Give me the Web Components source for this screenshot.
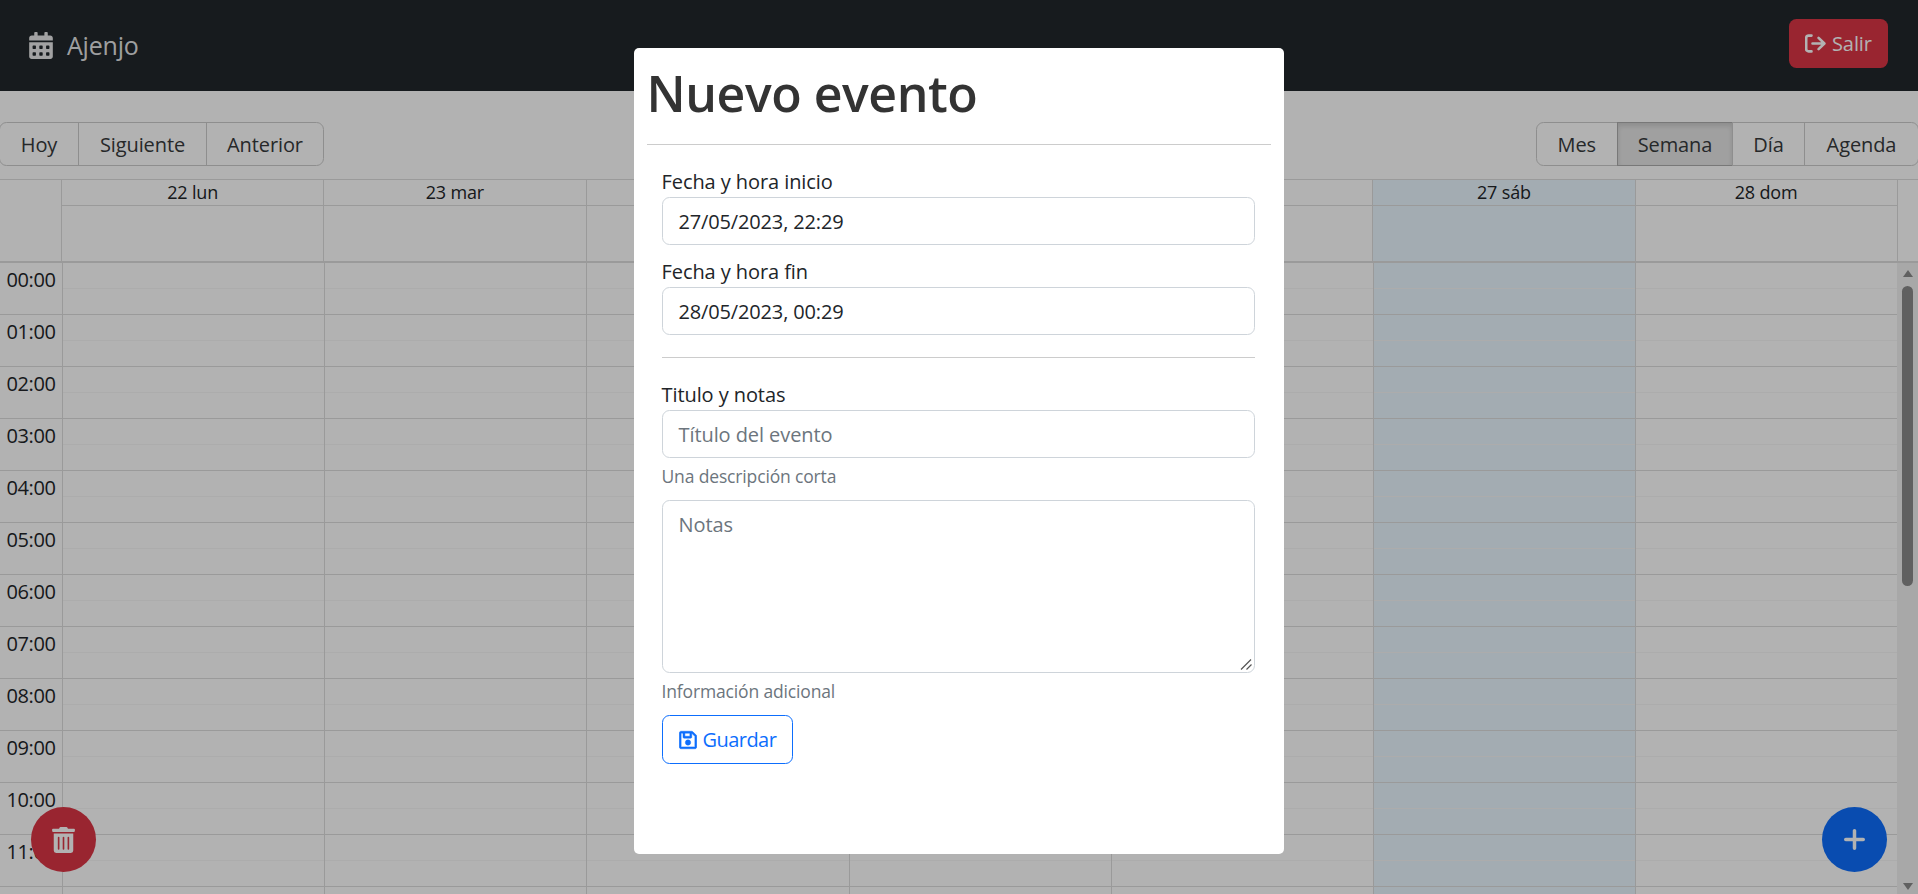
<!DOCTYPE html>
<html lang="es">
<head>
<meta charset="utf-8">
<title>Ajenjo</title>
<style>
html,body{margin:0;padding:0;height:894px;overflow:hidden;background:#fff;}
body{font-family:"Open Sans","Noto Sans",sans-serif;font-size:20px;line-height:1.5;color:#212529;}
</style>
</head>
<body>
<calendar-page></calendar-page>
<script>
const ICONS={
cal:['0 0 448 512','M0 464c0 26.5 21.5 48 48 48h352c26.5 0 48-21.5 48-48V192H0v272zm320-196c0-6.6 5.4-12 12-12h40c6.6 0 12 5.4 12 12v40c0 6.6-5.4 12-12 12h-40c-6.6 0-12-5.4-12-12v-40zm0 128c0-6.6 5.4-12 12-12h40c6.6 0 12 5.4 12 12v40c0 6.6-5.4 12-12 12h-40c-6.6 0-12-5.4-12-12v-40zM192 268c0-6.6 5.4-12 12-12h40c6.6 0 12 5.4 12 12v40c0 6.6-5.4 12-12 12h-40c-6.6 0-12-5.4-12-12v-40zm0 128c0-6.6 5.4-12 12-12h40c6.6 0 12 5.4 12 12v40c0 6.6-5.4 12-12 12h-40c-6.6 0-12-5.4-12-12v-40zM64 268c0-6.6 5.4-12 12-12h40c6.6 0 12 5.4 12 12v40c0 6.6-5.4 12-12 12H76c-6.6 0-12-5.4-12-12v-40zm0 128c0-6.6 5.4-12 12-12h40c6.6 0 12 5.4 12 12v40c0 6.6-5.4 12-12 12H76c-6.6 0-12-5.4-12-12v-40zM400 64h-48V16c0-8.8-7.2-16-16-16h-32c-8.8 0-16 7.2-16 16v48H160V16c0-8.8-7.2-16-16-16h-32c-8.8 0-16 7.2-16 16v48H48C21.5 64 0 85.5 0 112v48h448v-48c0-26.5-21.5-48-48-48z'],
trash:['0 0 448 512','M32 464a48 48 0 0 0 48 48h288a48 48 0 0 0 48-48V128H32zm272-256a16 16 0 0 1 32 0v224a16 16 0 0 1-32 0zm-96 0a16 16 0 0 1 32 0v224a16 16 0 0 1-32 0zm-96 0a16 16 0 0 1 32 0v224a16 16 0 0 1-32 0zM432 32H312l-9.4-18.7A24 24 0 0 0 281.1 0H166.8a23.72 23.72 0 0 0-21.4 13.3L136 32H16A16 16 0 0 0 0 48v32a16 16 0 0 0 16 16h416a16 16 0 0 0 16-16V48a16 16 0 0 0-16-16z'],
save:['0 0 448 512','M433.941 129.941l-83.882-83.882A48 48 0 0 0 316.118 32H48C21.49 32 0 53.49 0 80v352c0 26.51 21.49 48 48 48h352c26.51 0 48-21.49 48-48V163.882a48 48 0 0 0-14.059-33.941zM272 80v80H144V80h128zm122 352H54a6 6 0 0 1-6-6V86a6 6 0 0 1 6-6h42v104c0 13.255 10.745 24 24 24h176c13.255 0 24-10.745 24-24V83.882l78.243 78.243a6 6 0 0 1 1.757 4.243V426a6 6 0 0 1-6 6zM224 252a68 68 0 1 0 0 136 68 68 0 1 0 0-136z'],
plus:['0 0 21 21','M10.5 0c.97 0 1.75.78 1.75 1.75v6.99h6.99a1.76 1.76 0 0 1 0 3.52h-6.99v6.99a1.75 1.75 0 0 1-3.5 0v-6.99H1.76a1.76 1.76 0 0 1 0-3.52h6.99V1.75C8.75.78 9.53 0 10.5 0z']
};
function def(name,html,init){
  const tpl=document.createElement('template');tpl.innerHTML=html;
  customElements.define(name,class extends HTMLElement{
    connectedCallback(){
      if(this.shadowRoot)return;
      const s=this.attachShadow({mode:'open'});
      s.appendChild(tpl.content.cloneNode(true));
      if(init)init(this,s);
    }
  });
}
def('fa-icon',`<style>:host{display:inline-flex;flex:none;line-height:0}svg{width:100%;height:100%;display:block;fill:currentColor}</style><svg aria-hidden="true"><path/></svg>`,
(h,s)=>{const i=ICONS[h.getAttribute('name')];s.querySelector('svg').setAttribute('viewBox',i[0]);s.querySelector('path').setAttribute('d',i[1]);});

def('app-navbar',`<style>
:host{display:flex;flex:none;align-items:center;justify-content:space-between;height:91px;background:#21272c;padding:0 30px 0 29px;box-sizing:border-box}
.brand{display:flex;align-items:center;gap:14px;color:rgba(255,255,255,.9);font-size:25px;letter-spacing:-.2px}
fa-icon{width:24px;height:27px;margin-top:-1px}
</style><div class="brand"><fa-icon name="cal"></fa-icon><slot name="brand"></slot></div><slot></slot>`);

def('danger-button',`<style>
:host{display:inline-flex;align-items:center;gap:6px;height:49px;width:99px;margin-top:-4px;box-sizing:border-box;background:#dc3545;color:#fff;border-radius:7.5px;padding:0 16px;font-size:20px;letter-spacing:-.1px}
svg{width:21px;height:19px;flex:none;fill:none;stroke:currentColor;stroke-width:2.6;stroke-linecap:round;stroke-linejoin:round}
</style><svg viewBox="0 0 21 19"><path d="M6.5 1.6H3.6A2.4 2.4 0 0 0 1.2 4v11a2.4 2.4 0 0 0 2.4 2.4h2.9"/><path d="M7.5 9.5h11.6M13.6 3.9l5.8 5.6-5.8 5.6"/></svg><slot></slot>`);

def('rbc-toolbar',`<style>:host{display:flex;flex:none;justify-content:space-between;margin:31px -1px 13px -1px;height:44px}</style><slot></slot>`);
def('rbc-btn-group',`<style>:host{display:flex}::slotted(rbc-btn){margin-left:-1px}::slotted(rbc-btn:first-child){margin-left:0;border-radius:7.5px 0 0 7.5px}::slotted(rbc-btn:last-child){border-radius:0 7.5px 7.5px 0}</style><slot></slot>`);
def('rbc-btn',`<style>
:host{display:flex;align-items:center;justify-content:center;box-sizing:border-box;height:44px;border:1px solid #ccc;color:#373a3c;font-size:20px;padding-top:1px;letter-spacing:-.1px}
:host([active]){background:#e6e6e6;border-color:#adadad;box-shadow:inset 0 3px 5px rgba(0,0,0,.125)}
</style><slot></slot>`,(h)=>{h.style.width=h.getAttribute('w')+'px';});

def('week-calendar',`<style>
:host{display:flex;flex-direction:column;flex:1;min-height:0;overflow:hidden;border-top:1px solid #ddd;box-sizing:border-box}
.head{display:grid;grid-template-columns:61px repeat(7,262.26px) 1fr;flex:none;height:83px;border-bottom:2px solid #ddd;box-sizing:border-box}
.hc{border-left:1px solid #ddd;display:grid;grid-template-rows:26px 1fr;min-width:0}
.hc.today{background:#eaf6ff}
.hc b{font-weight:400;font-size:18px;line-height:25px;text-align:center;border-bottom:1px solid #ddd;letter-spacing:-.15px}
.main{flex:1;min-height:0;display:flex}
.scroll{flex:1;min-width:0;height:100%;overflow:hidden}
.row{display:grid;grid-template-columns:62px repeat(7,262.2px);height:52px;box-sizing:border-box;border-bottom:1px solid #ddd}
.t{font-size:20px;line-height:30px;padding-top:2px;text-align:center;letter-spacing:-.4px;white-space:nowrap}
.c{border-left:1px solid #ddd;display:grid;grid-template-rows:26px 1fr}
.c i{display:block;border-bottom:1px solid #f7f7f7}
.c.today{background:#eaf6ff}
.bar{flex:none;width:21px;background:#f1f1f1;display:flex;flex-direction:column;align-items:center}
.up,.down{width:0;height:0;border-left:5.5px solid transparent;border-right:5.5px solid transparent;flex:none}
.up{border-bottom:7px solid #8a8a8a;margin-top:7px}
.thumb{width:11px;height:300px;background:#8a8a8a;border-radius:5.5px;margin-top:9px;flex:none}
.sp{flex:1}
.down{border-top:7px solid #8a8a8a;margin-bottom:4px}
</style>
<div class="head" id="head"></div>
<div class="main"><div class="scroll" id="body"></div><div class="bar"><div class="up"></div><div class="thumb"></div><div class="sp"></div><div class="down"></div></div></div>`,
(h,s)=>{
  const days=['22 lun','23 mar','24 mié','25 jue','26 vie','27 sáb','28 dom'];
  let hd='<div></div>';
  days.forEach((d,i)=>{hd+=`<div class="hc${i==5?' today':''}"><b>${d}</b><span></span></div>`});
  hd+='<div class="hc"></div>';
  s.getElementById('head').innerHTML=hd;
  let b='';
  for(let r=0;r<13;r++){
    const t=r<12?String(r).padStart(2,'0')+':00':'';
    b+=`<div class="row"><div class="t">${t}</div>`;
    for(let i=0;i<7;i++)b+=`<div class="c${i==5?' today':''}"><i></i><span></span></div>`;
    b+='</div>';
  }
  s.getElementById('body').innerHTML=b;
});

def('round-fab',`<style>
:host{position:absolute;top:807px;width:65px;height:65px;border-radius:50%;display:flex;align-items:center;justify-content:center;color:#fff}
:host([variant=danger]){left:31px;background:#dc3545}
:host([variant=primary]){left:1822px;background:#0d6efd}
::slotted(fa-icon){width:23px;height:26px}
::slotted(fa-icon[name=plus]){width:21px;height:21px}
</style><slot></slot>`);

def('modal-overlay',`<style>
:host{position:absolute;left:0;top:0;width:1918px;height:894px;background:rgba(0,0,0,.3);display:flex;justify-content:center;align-items:flex-start}
</style><slot></slot>`);
def('event-modal',`<style>
:host{display:block;box-sizing:border-box;width:650px;height:806px;margin-top:48px;background:#fff;border-radius:5px;padding:15px 13px 0 12.5px;color:#212529}
h1{margin:0;font-size:50px;line-height:60px;font-weight:600;color:#333;letter-spacing:-.45px}
hr{border:0;border-top:1px solid #ccc;margin:21px 0 0}
.form{padding:22px 16.5px 0 15px;display:flex;flex-direction:column}
</style><h1>Nuevo evento</h1><hr><div class="form"><slot></slot></div>`);
def('form-label',`<style>:host{display:block;height:30px;line-height:30px;font-size:20px;letter-spacing:-.08px;color:#212529}</style><slot></slot>`);
def('form-input',`<style>
:host{display:block;box-sizing:border-box;height:47.5px;border:1px solid #ced4da;border-radius:7.5px;padding:8.5px 15px 0 16px;line-height:30px;font-size:20px;letter-spacing:-.15px;color:#212529;background:#fff;position:relative}
:host([placeholder]){color:#6c757d;letter-spacing:-.08px}
:host([area]){height:173px}
svg{position:absolute;right:1px;bottom:1px;width:14px;height:14px;stroke:#555;stroke-width:1.2;fill:none}
</style><slot></slot>`,(h,s)=>{ if(h.hasAttribute('area')){s.innerHTML+='<svg viewBox="0 0 14 14"><path d="M2 12.5 12 2.5M7.5 12.5 12.5 7.5"/></svg>'; } });
def('form-text',`<style>:host{display:block;height:26.25px;line-height:26.25px;font-size:17.5px;letter-spacing:-.15px;color:#6c757d;margin-top:5px}</style><slot></slot>`);
def('form-rule',`<style>:host{display:block;height:1px;background:#ccc;margin:22.5px 0 22px}</style>`);
def('outline-button',`<style>
:host{display:inline-flex;align-self:flex-start;align-items:center;gap:6px;box-sizing:border-box;height:49px;width:131px;border:1px solid #0d6efd;border-radius:7.5px;padding:1px 15px 0 16px;color:#0d6efd;font-size:20px;letter-spacing:-.55px}
fa-icon{width:18px;height:20px;stroke:currentColor;stroke-width:12}
</style><fa-icon name="save"></fa-icon><slot></slot>`);

def('calendar-page',`<style>
:host{display:flex;flex-direction:column;position:relative;width:1918px;height:894px;overflow:hidden}
</style>
<app-navbar><span slot="brand">Ajenjo</span><danger-button>Salir</danger-button></app-navbar>
<rbc-toolbar>
  <rbc-btn-group><rbc-btn w="80">Hoy</rbc-btn><rbc-btn w="129">Siguiente</rbc-btn><rbc-btn w="118">Anterior</rbc-btn></rbc-btn-group>
  <rbc-btn-group><rbc-btn w="82.5">Mes</rbc-btn><rbc-btn active w="116">Semana</rbc-btn><rbc-btn w="73">Día</rbc-btn><rbc-btn w="115">Agenda</rbc-btn></rbc-btn-group>
</rbc-toolbar>
<week-calendar></week-calendar>
<round-fab variant="danger"><fa-icon name="trash"></fa-icon></round-fab>
<round-fab variant="primary"><fa-icon name="plus"></fa-icon></round-fab>
<modal-overlay>
  <event-modal>
    <form-label>Fecha y hora inicio</form-label>
    <form-input>27/05/2023, 22:29</form-input>
    <form-label style="margin-top:12.5px">Fecha y hora fin</form-label>
    <form-input>28/05/2023, 00:29</form-input>
    <form-rule></form-rule>
    <form-label>Titulo y notas</form-label>
    <form-input placeholder>Título del evento</form-input>
    <form-text>Una descripción corta</form-text>
    <form-input placeholder area style="margin-top:11.25px">Notas</form-input>
    <form-text>Información adicional</form-text>
    <outline-button style="margin-top:10.75px">Guardar</outline-button>
  </event-modal>
</modal-overlay>`);
</script>
</body>
</html>
